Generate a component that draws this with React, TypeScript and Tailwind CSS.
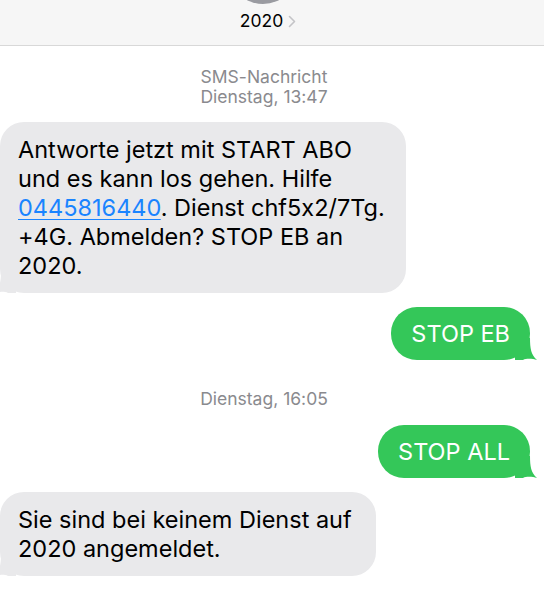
import React from "react";

const font = { fontFamily: "Inter, 'Liberation Sans', sans-serif", fontFeatureSettings: "'calt' 0" };

const LeftTail = () => (
    <svg className="absolute -left-[6px] bottom-0" width="22" height="22" viewBox="0 0 22 22">
        <path d="M22 0 L22 22 L14 22 C10 20 4 21 0 22 C6 17 7 10 7 0 Z" fill="#e9e9eb" />
    </svg>
);

const RightTail = () => (
    <svg className="absolute -right-[7px] bottom-0" width="22" height="22" viewBox="0 0 22 22">
        <path d="M0 0 L0 22 L8 22 C12 20 18 21 22 22 C16 17 15 10 15 0 Z" fill="#34c759" />
    </svg>
);

const Incoming = ({ children, className }: { children: React.ReactNode; className?: string }) => (
    <div className={`relative self-start bg-[#e9e9eb] rounded-[24px] pl-[18px] pr-[14px] pt-[13px] pb-[13px] text-[23.5px] leading-[29px] text-black ${className ?? ""}`}>
        <LeftTail />
        <div className="relative">{children}</div>
    </div>
);

const Outgoing = ({ children, className }: { children: React.ReactNode; className?: string }) => (
    <div className={`relative self-end mr-[14px] bg-[#34c759] rounded-[26px] px-[20px] py-[12px] text-[23.5px] leading-[29px] text-white ${className ?? ""}`}>
        <RightTail />
        <div className="relative">{children}</div>
    </div>
);

const Stamp = ({ children, className }: { children: React.ReactNode; className?: string }) => (
    <div className={`text-center pr-[16px] text-[17.5px] leading-[20px] text-[#8a8a8e] ${className ?? ""}`}>{children}</div>
);

export default function App() {
    return (
        <div className="w-[544px] h-[590px] bg-white overflow-hidden" style={font}>
            {/* Kopfzeile */}
            <div className="relative h-[46px] bg-[#f6f6f6] border-b border-[#d8d8d8] flex items-center justify-center pr-[16px]">
                <div className="absolute left-[228px] -top-[66px] w-[70px] h-[70px] rounded-full bg-[#9a9ba1]" />
                <div className="flex items-center gap-[5px] mt-[-2px] pl-[8px]">
                    <span className="text-[17.5px] text-black">2020</span>
                    <svg width="8" height="13" viewBox="0 0 8 13">
                        <path d="M1.5 1.5 L6.5 6.5 L1.5 11.5" stroke="#c4c4c7" strokeWidth="1.6" fill="none" strokeLinecap="round" strokeLinejoin="round" />
                    </svg>
                </div>
            </div>

            <div className="flex flex-col">
                <Stamp className="mt-[21px]">SMS-Nachricht</Stamp>
                <Stamp>Dienstag, 13:47</Stamp>

                <Incoming className="mt-[15px] w-[406px]">
                    Antworte jetzt mit START ABO und es kann los gehen. Hilfe{" "}
                    <span className="text-[#1a84ff] underline decoration-1 underline-offset-[3px]">0445816440</span>. Dienst chf5x2/7Tg.
                    +4G. Abmelden? STOP EB an 2020.
                </Incoming>

                <Outgoing className="mt-[14px]">STOP EB</Outgoing>

                <Stamp className="mt-[29px]">Dienstag, 16:05</Stamp>

                <Outgoing className="mt-[16px]">STOP ALL</Outgoing>

                <Incoming className="mt-[14px] w-[376px]">
                    Sie sind bei keinem Dienst auf 2020 angemeldet.
                </Incoming>
            </div>
        </div>
    );
}
